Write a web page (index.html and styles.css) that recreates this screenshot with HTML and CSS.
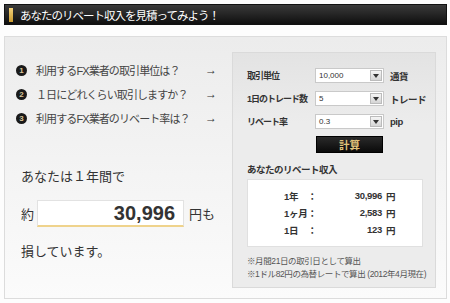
FILE: index.html
```html
<!DOCTYPE html>
<html lang="ja">
<head>
<meta charset="utf-8">
<link rel="stylesheet" href="styles.css">
</head>
<body>
<div class="wrap">
  <div class="header"><span class="mark"></span><h1>あなたのリベート収入を見積ってみよう！</h1></div>
  <div class="panel">
    <div class="left">
      <ul class="steps">
        <li><span class="num">1</span><span class="q">利用するFX業者の取引単位は？</span><span class="arrow">→</span></li>
        <li><span class="num">2</span><span class="q">１日にどれくらい取引しますか？</span><span class="arrow">→</span></li>
        <li><span class="num">3</span><span class="q">利用するFX業者のリベート率は？</span><span class="arrow">→</span></li>
      </ul>
      <div class="result">
        <p class="line">あなたは１年間で</p>
        <p class="line amount-line"><span>約</span><span class="amount">30,996</span><span>円も</span></p>
        <p class="line">損しています。</p>
      </div>
    </div>
    <div class="calc">
      <div class="row"><span class="label">取引単位</span><span class="select"><span class="val">10,000</span><span class="btn"></span></span><span class="unit">通貨</span></div>
      <div class="row"><span class="label">1日のトレード数</span><span class="select"><span class="val">5</span><span class="btn"></span></span><span class="unit">トレード</span></div>
      <div class="row"><span class="label">リベート率</span><span class="select"><span class="val">0.3</span><span class="btn"></span></span><span class="unit">pip</span></div>
      <div class="btnrow"><button class="go">計算</button></div>
      <h2 class="ttl">あなたのリベート収入</h2>
      <div class="box">
        <div class="r"><span class="k">1年　：</span><span class="v">30,996</span><span class="y">円</span></div>
        <div class="r"><span class="k">1ヶ月：</span><span class="v">2,583</span><span class="y">円</span></div>
        <div class="r"><span class="k">1日　：</span><span class="v">123</span><span class="y">円</span></div>
      </div>
      <p class="note">※月間21日の取引日として算出<br>※1ドル82円の為替レートで算出 (2012年4月現在)</p>
    </div>
  </div>
</div>
</body>
</html>
```

FILE: styles.css
```css
* { box-sizing: border-box; }
html, body { margin: 0; padding: 0; }
body {
  background: #fdfdfd;
  font-family: "Liberation Sans", "Noto Sans CJK JP", sans-serif;
  color: #333;
  width: 450px;
  height: 303px;
  overflow: hidden;
  white-space: nowrap;
}
.wrap { padding: 4px 3px 0 4px; }
.header {
  height: 21px;
  background: linear-gradient(#3a3a3a, #0f0f0f);
  border: 1px solid #111;
  display: flex;
  align-items: center;
  padding-left: 4px;
}
.mark {
  width: 4px;
  height: 14px;
  background: linear-gradient(#f4d27a, #c99a2e);
}
.header h1 {
  margin: 0 0 0 7px;
  font-size: 11.5px;
  font-weight: normal;
  color: #fff;
  letter-spacing: -1px;
}
.panel {
  margin-top: 11px;
  height: 263px;
  border: 1px solid #dcdcdc;
  background: linear-gradient(#ececec, #fbfbfb);
  display: flex;
}
.left { width: 227px; padding: 21px 0 0 11px; }
.steps { list-style: none; margin: 0; padding: 0; }
.steps li {
  display: flex;
  align-items: center;
  height: 24px;
  font-size: 11px;
  letter-spacing: -0.9px;
  color: #444;
}
.num {
  width: 11px;
  height: 11px;
  border-radius: 50%;
  background: #1a1a1a;
  color: #d9c79a;
  font-size: 8px;
  font-weight: bold;
  line-height: 11px;
  text-align: center;
  letter-spacing: 0;
  margin-right: 9px;
}
.q { flex: 1; }
.arrow { width: 14px; margin-right: 13px; font-size: 12px; color: #333; letter-spacing: 0; }
.result { padding: 35px 0 0 5px; }
.line { margin: 0; font-size: 13px; color: #333; display: flex; align-items: center; }
.line:first-child { height: 20px; }
.amount-line { margin-top: 15px; height: 27px; }
.amount {
  width: 147px;
  height: 27px;
  margin: 0 5px 0 3px;
  background: #fff;
  border: 1px solid #e2e2e2;
  border-bottom: 2px solid #efd38c;
  font-size: 20px;
  font-weight: bold;
  text-align: right;
  padding-right: 8px;
  line-height: 24px;
  color: #333;
}
.line:last-child { margin-top: 13px; height: 20px; }
.calc {
  margin: 15px 0 0 0;
  width: 204px;
  height: 236px;
  background: linear-gradient(#e3e3e3, #ececec 30%, #ececec);
  border: 1px solid #dadada;
  padding: 11px 0 0 14px;
}
.row { display: flex; align-items: center; height: 23px; font-size: 9.5px; font-weight: bold; color: #333; letter-spacing: -0.5px; }
.label { width: 68px; flex-shrink: 0; font-size: 9px; letter-spacing: -1px; }
.select {
  width: 69px;
  flex-shrink: 0;
  height: 15px;
  background: #fff;
  border: 1px solid #c9c9c9;
  display: flex;
  align-items: center;
  justify-content: space-between;
  font-size: 8px;
  font-weight: normal;
  letter-spacing: 0;
  padding-left: 3px;
}
.btn {
  width: 12px;
  height: 11px;
  margin-right: 1px;
  background: linear-gradient(#f5f5f5, #d5d5d5);
  border: 1px solid #bbb;
  position: relative;
}
.btn::after {
  content: "";
  position: absolute;
  left: 2px;
  top: 3px;
  border-left: 3px solid transparent;
  border-right: 3px solid transparent;
  border-top: 4px solid #333;
}
.unit { margin-left: 6px; }
.btnrow { padding: 2px 0 0 69px; }
.go {
  width: 67px;
  height: 17px;
  background: linear-gradient(#2a2a2a, #0a0a0a);
  border: 1px solid #000;
  color: #e0c27a;
  font-family: "Noto Sans CJK JP", sans-serif;
  font-size: 10.5px;
  font-weight: bold;
  padding: 0;
  line-height: 15px;
}
.ttl { margin: 9px 0 0 0; font-size: 9.5px; letter-spacing: -0.5px; font-weight: bold; color: #333; }
.box {
  margin-top: 3px;
  width: 176px;
  height: 68px;
  background: #fff;
  border: 1px solid #e0e0e0;
  padding-top: 7px;
}
.r { display: flex; height: 17px; align-items: center; font-size: 9.5px; font-weight: bold; letter-spacing: -0.3px; }
.k { width: 36px; margin-left: 36px; }
.v { width: 62px; text-align: right; }
.y { margin-left: 4px; }
.note { margin: 8px 0 0 0; font-size: 8.5px; line-height: 13px; color: #555; letter-spacing: -0.4px; }
```
